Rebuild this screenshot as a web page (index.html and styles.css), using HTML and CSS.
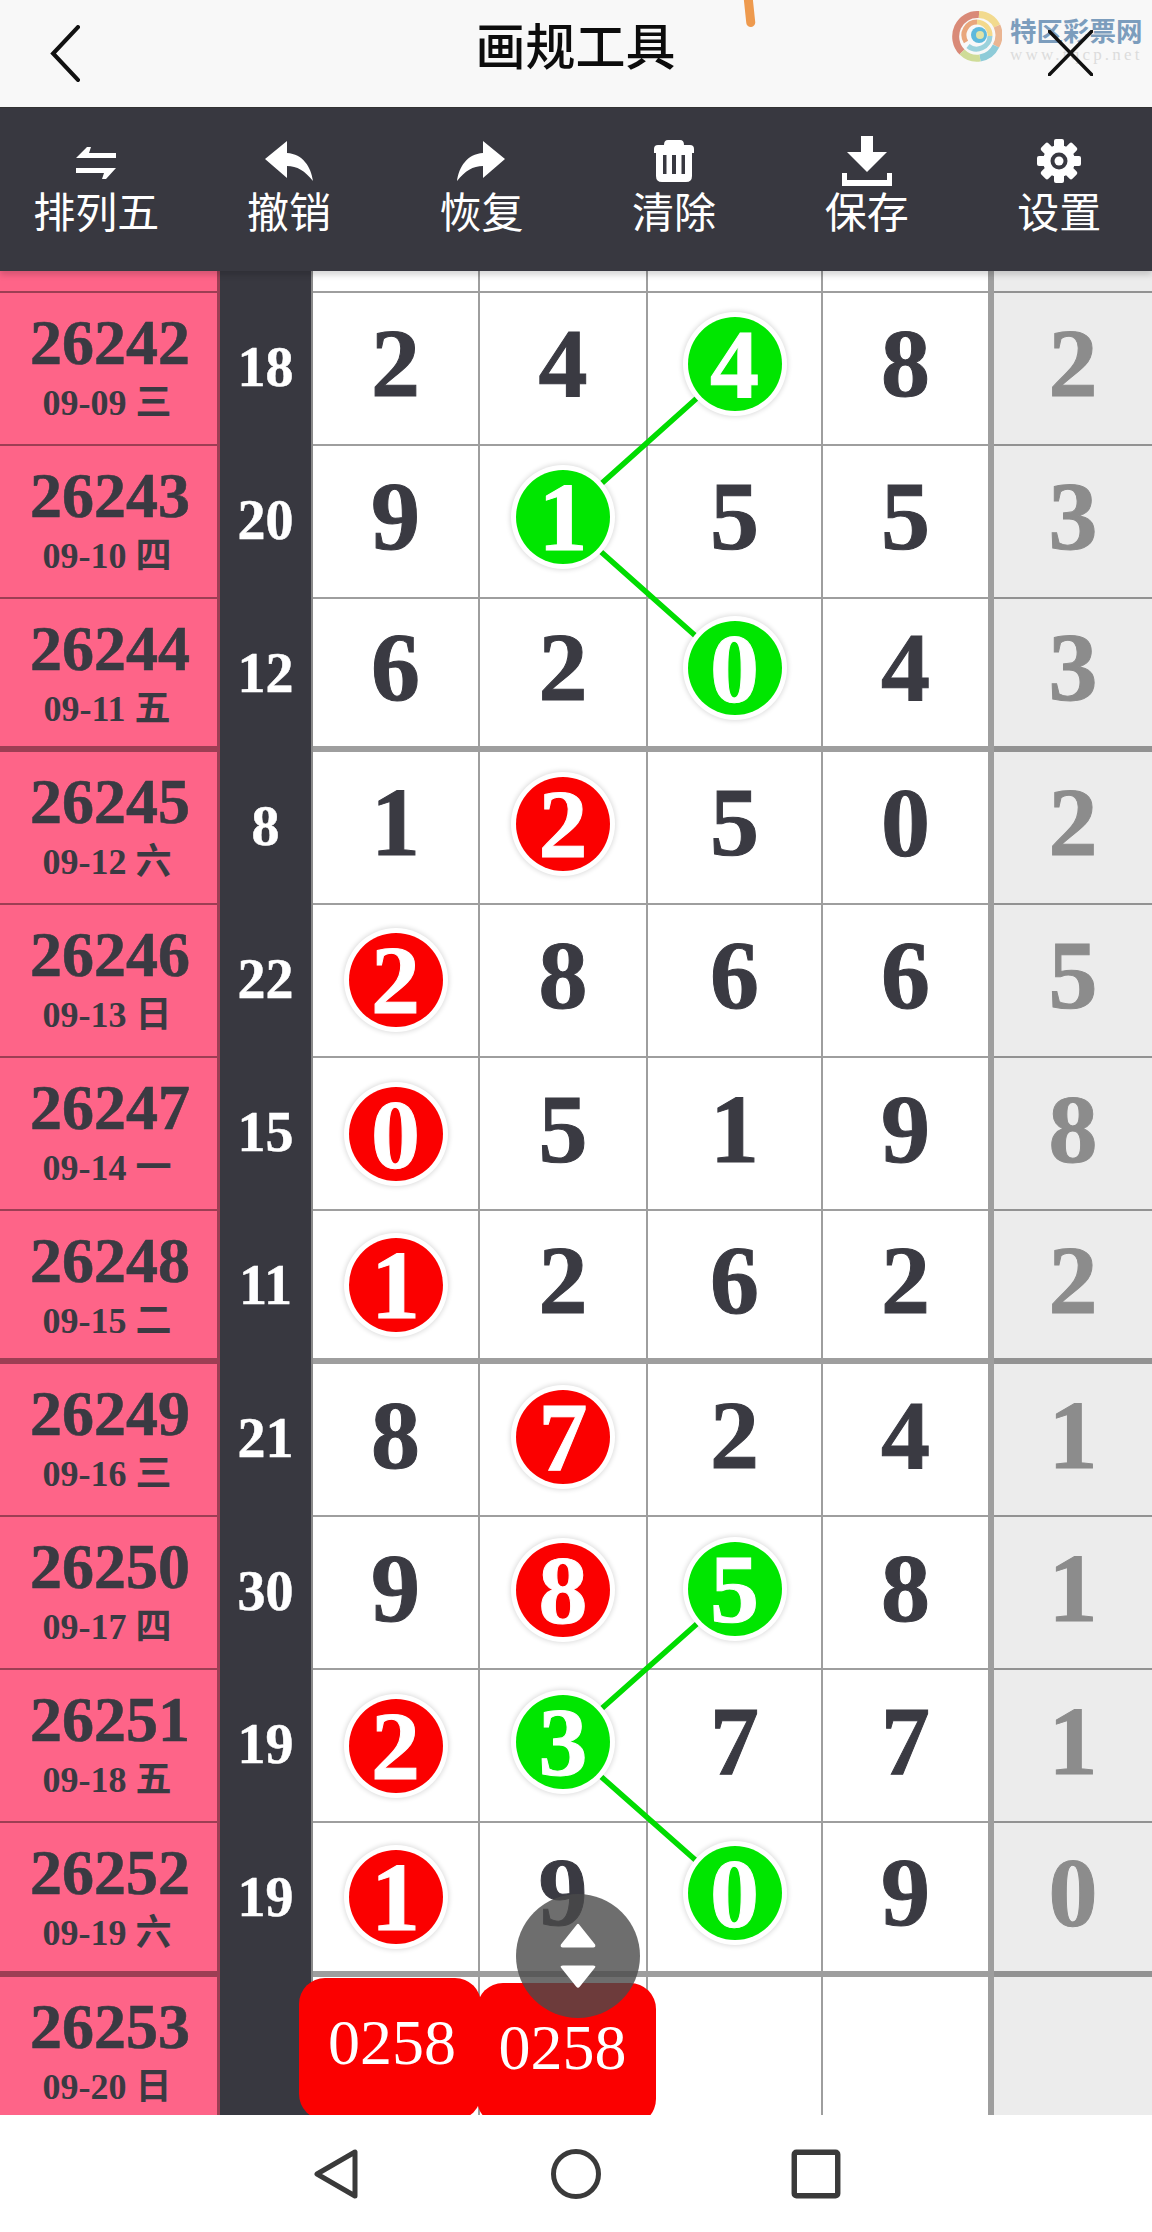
FILE: index.html
```html
<!DOCTYPE html>
<html lang="zh">
<head>
<meta charset="utf-8">
<title>画规工具</title>
<link rel="stylesheet" href="styles.css">
</head>
<body>
<div class="page">
  <header class="topbar">
    <svg class="back" viewBox="0 0 29 55"><path d="M27 2 L3 27.5 L27 53"/></svg>
    <h1 class="title">画规工具</h1>
    <svg class="close" viewBox="0 0 45 46"><path d="M1 1 L44 45 M44 1 L1 45"/></svg>
    <span class="smear"></span>
    <div class="logo">
      <svg class="logo-mark" viewBox="0 0 50 52">
        <g fill="none" stroke-width="7">
          <path d="M27 4.500 A21.500 22 0 0 0 10 42" stroke="#d98a78"/>
          <path d="M27 4.500 A21.500 22 0 0 1 45 16" stroke="#f2da8e"/>
          <path d="M45 16 A21.500 22 0 0 1 44 36" stroke="#eab592"/>
          <path d="M44 36 A21.500 22 0 0 1 28 48" stroke="#8ecbd8"/>
          <path d="M28 48 A21.500 22 0 0 1 10 42" stroke="#cfdc98"/>
          <path d="M14 32 A13 13 0 0 1 25 12" stroke="#e9a67c" stroke-width="5"/>
          <path d="M25 12 A13.500 13.500 0 0 1 38 26" stroke="#f3d98c" stroke-width="5"/>
          <path d="M38 26 A13.500 13.500 0 0 1 16 36" stroke="#9bd2dc" stroke-width="5"/>
        </g>
        <circle cx="27" cy="25" r="8" fill="#5fb9dc"/>
        <circle cx="28" cy="25" r="4" fill="#dfe3a8"/>
      </svg>
      <div class="logo-words">
        <span class="logo-name">特区彩票网</span>
        <span class="logo-url">www.tqcp.net</span>
      </div>
    </div>
  </header>

  <nav class="toolbar">
    <div class="tool">
      <svg class="tool-icon" viewBox="0 0 50 46"><path d="M5 20 L16 9 L20 9 L18 15 L45 15 L45 20Z M5 30 L45 30 L35 41 L31 41 L33 35 L5 35Z"/></svg>
      <span>排列五</span>
    </div>
    <div class="tool">
      <svg class="tool-icon" viewBox="0 0 50 46"><path d="M1 21 L23 3 L23 15 C39 16 47 29 49 43 C41 33 33 28 23 28 L23 40Z"/></svg>
      <span>撤销</span>
    </div>
    <div class="tool">
      <svg class="tool-icon" viewBox="0 0 50 46"><path d="M49 21 L27 3 L27 15 C11 16 3 29 1 43 C9 33 17 28 27 28 L27 40Z"/></svg>
      <span>恢复</span>
    </div>
    <div class="tool">
      <svg class="tool-icon" viewBox="0 0 50 46"><path fill-rule="evenodd" d="M15 7 Q15 2 19 2 L31 2 Q35 2 35 7 L41 7 Q45 7 45 11 L45 15 L43 15 L43 38 Q43 44 37 44 L13 44 Q7 44 7 38 L7 15 L5 15 L5 11 Q5 7 9 7Z M14 17 L14 36 L17.500 36 L17.500 17Z M23 17 L23 36 L27 36 L27 17Z M32.500 17 L32.500 36 L36 36 L36 17Z"/></svg>
      <span>清除</span>
    </div>
    <div class="tool">
      <svg class="tool-icon" viewBox="0 0 50 50"><path d="M19 0 H31 V16 H45 L25 36 L5 16 H19Z M0 37 H5 V44 H45 V37 H50 V50 H0Z"/></svg>
      <span>保存</span>
    </div>
    <div class="tool">
      <svg class="tool-icon" viewBox="0 0 50 46">
        <g>
          <circle cx="25" cy="23" r="16"/>
          <rect x="20" y="1" width="10" height="44" rx="2"/>
          <rect x="20" y="1" width="10" height="44" rx="2" transform="rotate(45 25 23)"/>
          <rect x="20" y="1" width="10" height="44" rx="2" transform="rotate(90 25 23)"/>
          <rect x="20" y="1" width="10" height="44" rx="2" transform="rotate(135 25 23)"/>
        </g>
        <circle class="gear-hole" cx="25" cy="23" r="8.500"/>
        <circle cx="25" cy="23" r="4.500"/>
      </svg>
      <span>设置</span>
    </div>
  </nav>

  <main class="board">
    <div class="row row-stub">
      <div class="issue"></div><div class="sum"></div><div class="cell"></div><div class="cell"></div><div class="cell"></div><div class="cell cell-end"></div><div class="cell cell-grey"></div>
    </div>
    <div class="row">
      <div class="issue"><b>26242</b><span>09-09 三</span></div><div class="sum">18</div>
      <div class="cell">2</div><div class="cell">4</div><div class="cell"><i class="ball green">4</i></div><div class="cell cell-end">8</div><div class="cell cell-grey">2</div>
    </div>
    <div class="row">
      <div class="issue"><b>26243</b><span>09-10 四</span></div><div class="sum">20</div>
      <div class="cell">9</div><div class="cell"><i class="ball green">1</i></div><div class="cell">5</div><div class="cell cell-end">5</div><div class="cell cell-grey">3</div>
    </div>
    <div class="row row-thick">
      <div class="issue"><b>26244</b><span>09-11 五</span></div><div class="sum">12</div>
      <div class="cell">6</div><div class="cell">2</div><div class="cell"><i class="ball green">0</i></div><div class="cell cell-end">4</div><div class="cell cell-grey">3</div>
    </div>
    <div class="row">
      <div class="issue"><b>26245</b><span>09-12 六</span></div><div class="sum">8</div>
      <div class="cell">1</div><div class="cell"><i class="ball red">2</i></div><div class="cell">5</div><div class="cell cell-end">0</div><div class="cell cell-grey">2</div>
    </div>
    <div class="row">
      <div class="issue"><b>26246</b><span>09-13 日</span></div><div class="sum">22</div>
      <div class="cell"><i class="ball red first">2</i></div><div class="cell">8</div><div class="cell">6</div><div class="cell cell-end">6</div><div class="cell cell-grey">5</div>
    </div>
    <div class="row">
      <div class="issue"><b>26247</b><span>09-14 一</span></div><div class="sum">15</div>
      <div class="cell"><i class="ball red first">0</i></div><div class="cell">5</div><div class="cell">1</div><div class="cell cell-end">9</div><div class="cell cell-grey">8</div>
    </div>
    <div class="row row-thick">
      <div class="issue"><b>26248</b><span>09-15 二</span></div><div class="sum">11</div>
      <div class="cell"><i class="ball red first">1</i></div><div class="cell">2</div><div class="cell">6</div><div class="cell cell-end">2</div><div class="cell cell-grey">2</div>
    </div>
    <div class="row">
      <div class="issue"><b>26249</b><span>09-16 三</span></div><div class="sum">21</div>
      <div class="cell">8</div><div class="cell"><i class="ball red">7</i></div><div class="cell">2</div><div class="cell cell-end">4</div><div class="cell cell-grey">1</div>
    </div>
    <div class="row">
      <div class="issue"><b>26250</b><span>09-17 四</span></div><div class="sum">30</div>
      <div class="cell">9</div><div class="cell"><i class="ball red">8</i></div><div class="cell"><i class="ball green">5</i></div><div class="cell cell-end">8</div><div class="cell cell-grey">1</div>
    </div>
    <div class="row">
      <div class="issue"><b>26251</b><span>09-18 五</span></div><div class="sum">19</div>
      <div class="cell"><i class="ball red first">2</i></div><div class="cell"><i class="ball green">3</i></div><div class="cell">7</div><div class="cell cell-end">7</div><div class="cell cell-grey">1</div>
    </div>
    <div class="row row-thick">
      <div class="issue"><b>26252</b><span>09-19 六</span></div><div class="sum">19</div>
      <div class="cell"><i class="ball red first">1</i></div><div class="cell">9</div><div class="cell"><i class="ball green">0</i></div><div class="cell cell-end">9</div><div class="cell cell-grey">0</div>
    </div>
    <div class="row row-last">
      <div class="issue"><b>26253</b><span>09-20 日</span></div><div class="sum"></div>
      <div class="cell"></div><div class="cell"></div><div class="cell"></div><div class="cell cell-end"></div><div class="cell cell-grey"></div>
    </div>

    <svg class="links" viewBox="0 0 1152 1844">
      <path d="M735 93 L563 247 L735 400 M735 1319 L563 1472 L735 1624"/>
    </svg>

    <div class="picks">
      <div class="pick">0258</div>
      <div class="pick pick-second">0258</div>
    </div>
  </main>

  <div class="float-btn">
    <svg viewBox="0 0 40 72"><path d="M20 2 Q21 2 22 4 L38 24 Q39 27 36 27 L4 27 Q1 27 2 24 L18 4 Q19 2 20 2Z M4 46 L36 46 Q39 46 38 48 L22 68 Q20 71 18 68 L2 48 Q1 46 4 46Z"/></svg>
  </div>

  <footer class="navbar">
    <div class="nav-slot"><svg class="nav-icon" viewBox="0 0 44 50"><path d="M3 25 L41 3 L41 47Z"/></svg></div>
    <div class="nav-slot"><svg class="nav-icon" viewBox="0 0 50 50"><circle cx="25" cy="25" r="22.500"/></svg></div>
    <div class="nav-slot"><svg class="nav-icon" viewBox="0 0 46 46"><rect x="3" y="3" width="40" height="40" rx="2"/></svg></div>
  </footer>
</div>
</body>
</html>
```

FILE: styles.css
```css
* { box-sizing: border-box; }
html, body { margin: 0; padding: 0; }
body { background: #fff; font-family: "Liberation Serif", "Noto Sans CJK SC", serif; }

.page {
  position: relative;
  width: 1152px;
  height: 2232px;
  overflow: hidden;
  display: flex;
  flex-direction: column;
}

/* top bar */
.topbar {
  position: relative;
  height: 108px;
  flex: none;
  background: #f8f8f8;
  display: grid;
  grid-template-columns: 1fr auto 1fr;
  align-items: center;
  padding: 0 59px 0 50px;
}
.title {
  margin: 0 0 0 8px;
  font: 500 50px/1 "Noto Sans CJK SC", sans-serif;
  color: #0c0c0c;
  padding-bottom: 23px;
}
.back { width: 30px; height: 57px; justify-self: start; fill: none; stroke: #111; stroke-width: 4; stroke-linecap: round; margin-bottom: 2px; }
.close { width: 45px; height: 46px; justify-self: end; fill: none; stroke: #111; stroke-width: 3.500; stroke-linecap: round; margin-bottom: 2px; position: relative; z-index: 2; }
.smear {
  position: absolute;
  left: 745px;
  top: -6px;
  width: 9px;
  height: 33px;
  background: #ee9a4e;
  border-radius: 0 0 6px 6px;
  transform: rotate(-6deg);
}
.logo {
  position: absolute;
  left: 952px;
  top: 10px;
  display: flex;
  gap: 8px;
}
.logo-mark { width: 50px; height: 52px; filter: blur(0.6px); }
.logo-words { display: flex; flex-direction: column; padding-top: 6px; }
.logo-name {
  font: 700 26.500px/28px "Noto Sans CJK SC", sans-serif;
  color: #7c9dbd;
  white-space: nowrap;
}
.logo-url {
  font: 400 17px/16px "Liberation Serif", serif;
  letter-spacing: 3.200px;
  color: #dcdcdc;
  white-space: nowrap;
  margin-top: 3px;
}

/* toolbar */
.toolbar {
  position: relative;
  z-index: 3;
  height: 163px;
  flex: none;
  background: #383840;
  display: grid;
  grid-template-columns: repeat(6, 192.600px);
  padding-top: 28px;
  box-shadow: 0 -1px 0 #333, 0 4px 6px rgba(0, 0, 0, 0.16);
}
.tool {
  display: flex;
  flex-direction: column;
  align-items: center;
  color: #fff;
  font: 400 42px/44px "Noto Sans CJK SC", sans-serif;
}
.tool-icon { width: 50px; height: 50px; fill: #fff; margin-bottom: 2px; }
.gear-hole { fill: #383840; }

/* board */
.board {
  position: relative;
  height: 1844px;
  flex: none;
  overflow: hidden;
  background: #fff;
}
.row {
  display: grid;
  grid-template-columns: 220px 93px 167px 168px 175px 171px 158px;
  height: 153.100px;
}
.row-stub { height: 21.500px; }
.row-last { height: 138.900px; }
.issue, .cell {
  border-bottom: 2px solid rgba(0, 0, 0, 0.38);
}
.row-thick .issue, .row-thick .cell { border-bottom-width: 6px; }
.row-last .issue, .row-last .cell { border-bottom: 0; }
.issue {
  background: #fe6488;
  border-right: 3px solid rgba(0, 0, 0, 0.38);
  color: #3a3a42;
  display: flex;
  flex-direction: column;
  align-items: center;
  padding-top: 18px;
  padding-right: 3px;
}
.issue b {
  font-weight: 700;
  font-size: 64px;
  line-height: 64px;
  margin-left: 6px;
  -webkit-text-stroke: 0.600px #3a3a42;
}
.issue span {
  font-weight: 700;
  font-size: 36px;
  line-height: 40px;
  margin-top: 8px;
  white-space: nowrap;
}
.sum {
  background: #383840;
  border-right: 2px solid #8a8a8a;
  color: #fff;
  font-weight: 700;
  font-size: 56px;
  display: flex;
  align-items: center;
  justify-content: center;
  padding-bottom: 5px;
  -webkit-text-stroke: 0.500px #fff;
}
.cell {
  border-right: 2px solid rgba(0, 0, 0, 0.38);
  color: #3a3a42;
  font-weight: 700;
  font-size: 98px;
  line-height: 1;
  display: flex;
  align-items: center;
  justify-content: center;
  padding-bottom: 10px;
  -webkit-text-stroke: 1px #3a3a42;
}
.cell-end { border-right-width: 6px; }
.cell-grey { background: #ececec; color: #8c8c8c; border-right: 0; -webkit-text-stroke-color: #8c8c8c; }
.ball {
  position: relative;
  z-index: 2;
  flex: none;
  width: 94px;
  height: 94px;
  border-radius: 50%;
  color: #fff;
  font-style: normal;
  display: flex;
  align-items: center;
  justify-content: center;
  -webkit-text-stroke: 1px #fff;
  box-shadow: 0 0 0 5px #fff, 0 0 5px 6px rgba(0, 0, 0, 0.14);
}
.red { background: #fb0000; margin-top: 4px; }
.green { background: #00e600; margin-top: 2px; }
.red.first { margin-top: 10px; }

.links {
  position: absolute;
  left: 0;
  top: 0;
  width: 1152px;
  height: 1844px;
  z-index: 1;
  fill: none;
  stroke: #00dc00;
  stroke-width: 5.500;
}
.picks {
  position: absolute;
  left: 299px;
  top: 1707px;
  z-index: 3;
  display: flex;
  align-items: flex-start;
}
.pick {
  width: 182px;
  height: 142px;
  background: #fb0000;
  border-radius: 26px;
  color: #fff;
  font-size: 64px;
  line-height: 1;
  text-align: center;
  padding: 33px 0 0 4px;
}
.pick-second { margin: 5px 0 0 -4px; width: 179px; padding: 33px 8px 0 0; }

.float-btn {
  position: absolute;
  left: 516px;
  top: 1894px;
  z-index: 4;
  width: 124px;
  height: 124px;
  border-radius: 50%;
  background: rgba(74, 74, 74, 0.8);
  display: flex;
  align-items: center;
  justify-content: center;
}
.float-btn svg { width: 38px; height: 72px; fill: #fff; }

/* nav bar */
.navbar {
  flex: 1;
  background: #fff;
  display: flex;
  justify-content: center;
  align-items: center;
}
.nav-slot { width: 240px; display: flex; justify-content: center; }
.nav-icon { height: 50px; width: 50px; fill: none; stroke: #3a3a3a; stroke-width: 5; stroke-linejoin: round; }
```
